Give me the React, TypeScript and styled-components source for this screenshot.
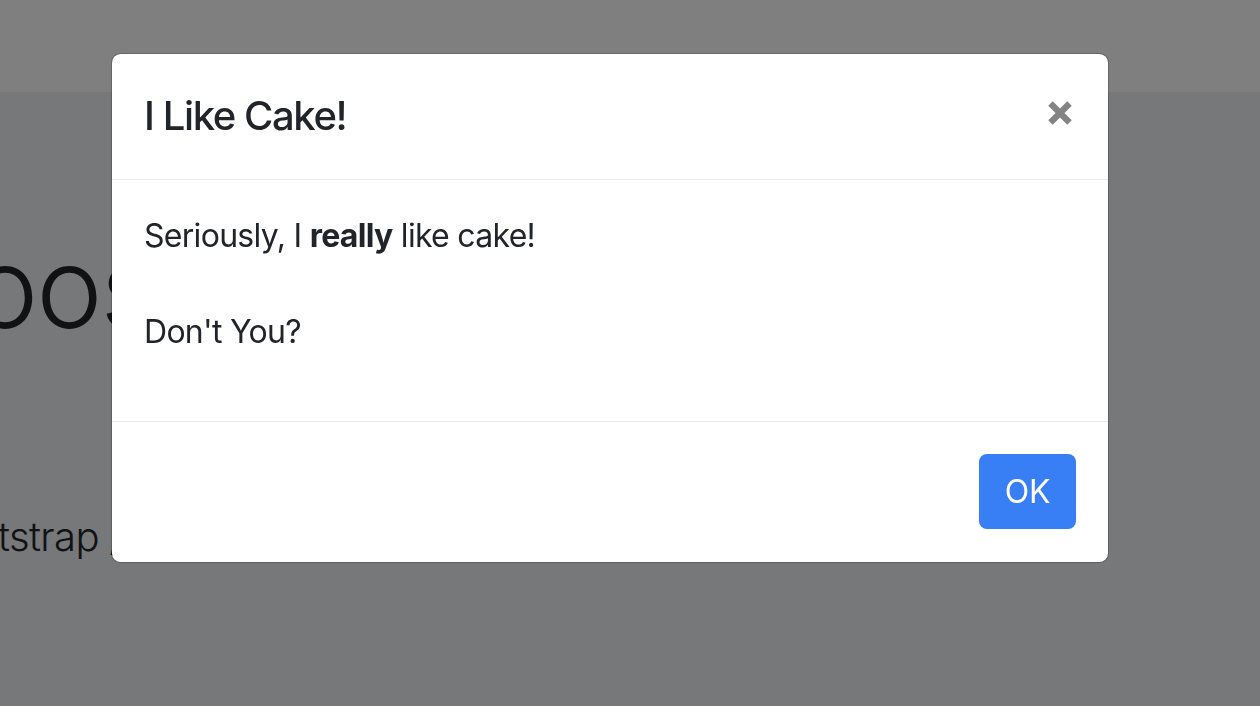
import styled, { createGlobalStyle } from "styled-components";

const GlobalStyle = createGlobalStyle`
  html, body {
    margin: 0;
    padding: 0;
    height: 100%;
    overflow: hidden;
  }
  body {
    font-family: Inter, "Liberation Sans", sans-serif;
    color: #212529;
  }
`;

const Page = styled.div`
  width: 1260px;
  height: 706px;
  display: flex;
  flex-direction: column;
  background: #eef0f4;
  overflow: hidden;
`;

const Navbar = styled.div`
  height: 92px;
  flex-shrink: 0;
  background: #ffffff;
`;

const Jumbotron = styled.div`
  display: flex;
  flex-direction: column;
  padding-top: 128px;
  white-space: nowrap;
`;

const Display = styled.h1`
  margin: 0 0 0 -171px;
  font-size: 112px;
  font-weight: 300;
  line-height: 1.2;
  letter-spacing: -0.02em;
  color: #212529;
`;

const Lead = styled.p`
  margin: 153px 0 0 -186px;
  font-size: 40px;
  font-weight: 300;
  line-height: 1.5;
  letter-spacing: -0.015em;
  color: #212529;
`;

const Backdrop = styled.div`
  position: fixed;
  inset: 0;
  background: rgba(0, 0, 0, 0.5);
`;

const ModalLayer = styled.div`
  position: fixed;
  inset: 0;
  display: flex;
  align-items: flex-start;
`;

const Dialog = styled.div`
  box-sizing: border-box;
  width: 998px;
  margin: 53px 0 0 111px;
  display: flex;
  flex-direction: column;
  background: #ffffff;
  border: 1px solid rgba(0, 0, 0, 0.2);
  border-radius: 9.6px;
  background-clip: padding-box;
`;

const Header = styled.div`
  display: flex;
  align-items: flex-start;
  justify-content: space-between;
  height: 126px;
  box-sizing: border-box;
  padding: 32px;
  border-bottom: 1px solid #e9ecef;
`;

const Title = styled.h5`
  margin: 0;
  font-size: 40px;
  font-weight: 500;
  line-height: 60px;
  letter-spacing: -0.035em;
  color: #212529;
`;

const CloseButton = styled.button`
  display: flex;
  align-items: center;
  justify-content: center;
  width: 26px;
  height: 54px;
  margin-right: 3px;
  padding: 0;
  border: 0;
  background: transparent;
  opacity: 0.48;
  cursor: pointer;
`;

const Body = styled.div`
  padding: 32px 32px 33px;
`;

const Text = styled.p`
  margin: 0 0 32px 0;
  font-size: 32px;
  line-height: 48px;
  letter-spacing: -0.022em;
  color: #212529;
`;

const Footer = styled.div`
  display: flex;
  justify-content: flex-end;
  height: 141px;
  box-sizing: border-box;
  padding: 24px;
  border-top: 1px solid #e9ecef;
`;

const PrimaryButton = styled.button`
  margin: 8px;
  width: 97px;
  height: 75px;
  padding: 0;
  border: 0;
  border-radius: 8px;
  background: #387ef5;
  color: #ffffff;
  font-family: Inter, "Liberation Sans", sans-serif;
  font-size: 32px;
  line-height: 1.5;
  letter-spacing: -0.01em;
  cursor: pointer;
`;

const CloseIcon = () => (
  <svg width="26" height="26" viewBox="0 0 26 26">
    <path d="M3.5 3.5L22.5 22.5M22.5 3.5L3.5 22.5" stroke="#000" strokeWidth="6.4" />
  </svg>
);

export default function App() {
  return (
    <>
      <GlobalStyle />
      <Page>
        <Navbar />
        <Jumbotron>
          <Display>Choose Bootstrap</Display>
          <Lead>React Bootstrap / Modal example</Lead>
        </Jumbotron>
      </Page>
      <Backdrop />
      <ModalLayer>
        <Dialog>
          <Header>
            <Title>I Like Cake!</Title>
            <CloseButton aria-label="Close">
              <CloseIcon />
            </CloseButton>
          </Header>
          <Body>
            <Text>
              Seriously, I <strong>really</strong> like cake!
              <br />
              <br />
              Don't You?
            </Text>
          </Body>
          <Footer>
            <PrimaryButton>OK</PrimaryButton>
          </Footer>
        </Dialog>
      </ModalLayer>
    </>
  );
}
